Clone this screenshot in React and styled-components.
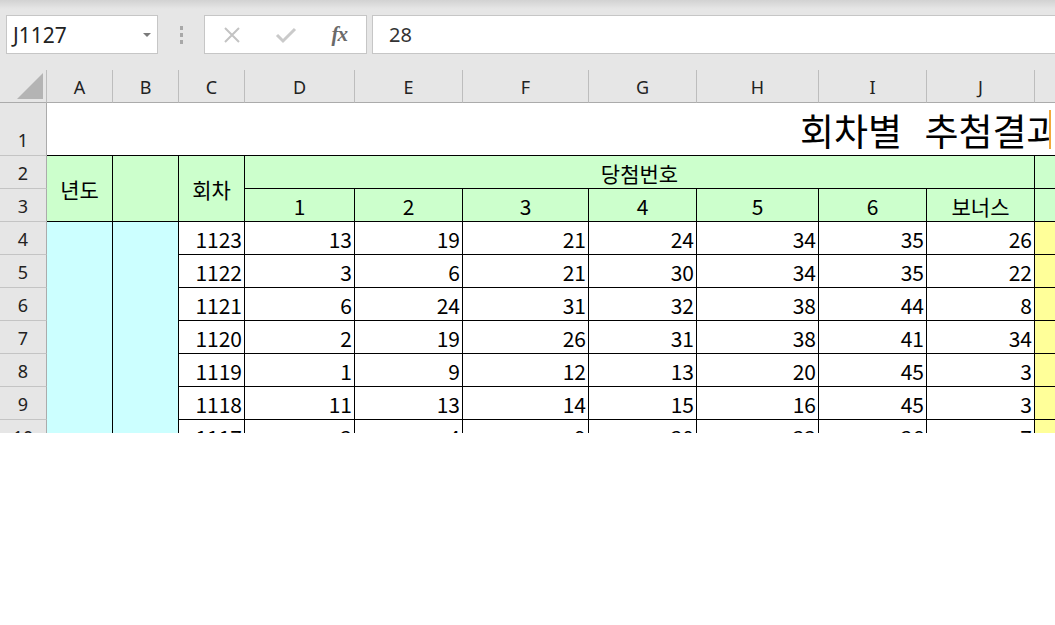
import React from 'react';
import styled, { createGlobalStyle } from 'styled-components';

const GlobalStyle = createGlobalStyle`
  html, body {
    margin: 0;
    padding: 0;
    background: #ffffff;
  }
  body {
    font-family: 'Noto Sans', 'Noto Sans CJK KR', sans-serif;
  }
`;

const COLS = [47, 66, 66, 66, 110, 108, 126, 108, 122, 108, 108, 108];
const LETTERS = ['A', 'B', 'C', 'D', 'E', 'F', 'G', 'H', 'I', 'J', 'K'];

const ROWS = [
  [1123, 13, 19, 21, 24, 34, 35, 26],
  [1122, 3, 6, 21, 30, 34, 35, 22],
  [1121, 6, 24, 31, 32, 38, 44, 8],
  [1120, 2, 19, 26, 31, 38, 41, 34],
  [1119, 1, 9, 12, 13, 20, 45, 3],
  [1118, 11, 13, 14, 15, 16, 45, 3],
  [1117, 3, 4, 9, 30, 33, 36, 7],
  [1116, 15, 16, 17, 25, 30, 31, 32],
];

const Window = styled.div`
  width: 1055px;
  height: 433px;
  overflow: hidden;
  background: #e6e6e6;
`;

const FormulaBar = styled.div`
  height: 70px;
  box-sizing: border-box;
  padding: 15px 0 16px 6px;
  display: flex;
  align-items: stretch;
  background: linear-gradient(#d2d2d2 0px, #e6e6e6 9px, #e6e6e6 100%);
`;

const Box = styled.div`
  background: #ffffff;
  border: 1px solid #c6c6c6;
  box-sizing: border-box;
  display: flex;
  align-items: center;
`;

const NameBox = styled(Box)`
  width: 152px;
  padding: 0 6px 0 6px;
  justify-content: space-between;
  font-size: 21px;
  color: #222;
`;

const Caret = styled.span`
  width: 0;
  height: 0;
  border-left: 4px solid transparent;
  border-right: 4px solid transparent;
  border-top: 4px solid #7a7a7a;
  margin-top: 1px;
`;

const Grip = styled.div`
  width: 46px;
  display: flex;
  flex-direction: column;
  align-items: center;
  justify-content: center;
  gap: 3px;
  span {
    width: 3px;
    height: 4px;
    background: #a8a8a8;
  }
`;

const ButtonsBox = styled(Box)`
  width: 163px;
`;

const IconSlot = styled.div`
  width: 54px;
  display: flex;
  align-items: center;
  justify-content: center;
`;

const FxText = styled.span`
  font-family: 'Liberation Serif', serif;
  font-style: italic;
  font-weight: bold;
  font-size: 21px;
  color: #6a6a6a;
  letter-spacing: -1px;
`;

const FormulaInput = styled(Box)`
  flex: 1;
  margin-left: 5px;
  border-right: none;
  padding-left: 16px;
  font-size: 20px;
  color: #333;
`;

const Sheet = styled.div`
  display: grid;
  grid-template-columns: ${COLS.map((c) => c + 'px').join(' ')};
  grid-template-rows: 33px 53px repeat(10, 33px);
  background: #ffffff;
  font-family: 'Noto Sans CJK KR', 'Noto Sans', sans-serif;
`;

const Corner = styled.div`
  grid-column: 1;
  grid-row: 1;
  background: #e6e6e6;
  border-right: 1px solid #bdbdbd;
  border-bottom: 1px solid #ababab;
  display: flex;
  align-items: flex-end;
  justify-content: flex-end;
  padding: 0 3px 3px 0;
`;

const ColHead = styled.div`
  background: #e6e6e6;
  border-right: 1px solid #bdbdbd;
  border-bottom: 1px solid #ababab;
  display: flex;
  align-items: center;
  justify-content: center;
  font-family: 'Noto Sans', sans-serif;
  font-size: 18px;
  color: #222;
  padding-top: 1px;
`;

const RowHead = styled.div`
  grid-column: 1;
  grid-row: ${(p) => p.$row};
  background: #e6e6e6;
  border-right: 1px solid #ababab;
  border-bottom: 1px solid #c4c4c4;
  display: flex;
  align-items: flex-end;
  justify-content: center;
  padding-bottom: 3px;
  font-family: 'Noto Sans', sans-serif;
  font-size: 18px;
  color: #222;
`;

const Cell = styled.div`
  grid-column: ${(p) => p.$col};
  grid-row: ${(p) => p.$row};
  background: ${(p) => p.$bg || '#ffffff'};
  border-right: 1px solid ${(p) => p.$line || '#000'};
  border-bottom: 1px solid #000;
  display: flex;
  align-items: center;
  justify-content: ${(p) => (p.$right ? 'flex-end' : 'center')};
  padding-right: ${(p) => (p.$right ? '2px' : '0')};
  padding-top: 1px;
  font-size: 21px;
  color: #000;
  white-space: nowrap;
  overflow: hidden;
`;

const TitleCell = styled.div`
  grid-column: 2 / 13;
  grid-row: 2;
  overflow: hidden;
  border-bottom: 1px solid #000;
  display: flex;
  align-items: center;
  font-size: 37px;
  white-space: nowrap;
`;

const TitleText = styled.span`
  display: block;
  box-sizing: border-box;
  width: 1004px;
  padding: 1px 0 0 753px;
  overflow: hidden;
  word-spacing: 14px;
  line-height: 38px;
  border-right: 2px solid #f2a93b;
`;

const GREEN = '#ccffcc';
const CYAN = '#ccffff';
const YELLOW = '#ffff99';

const App = () => {
  const rowNums = Array.from({ length: 11 }, (_, i) => i + 1);
  return (
    <>
      <GlobalStyle />
      <Window>
        <FormulaBar>
          <NameBox>
            <span>J1127</span>
            <Caret />
          </NameBox>
          <Grip>
            <span />
            <span />
            <span />
          </Grip>
          <ButtonsBox>
            <IconSlot>
              <svg width="20" height="20" viewBox="0 0 20 20">
                <path d="M3 3 L17 17 M17 3 L3 17" stroke="#c3c3c3" strokeWidth="2" fill="none" />
              </svg>
            </IconSlot>
            <IconSlot>
              <svg width="22" height="20" viewBox="0 0 22 20">
                <path d="M2 10 L8 16 L20 4" stroke="#cacaca" strokeWidth="3" fill="none" />
              </svg>
            </IconSlot>
            <IconSlot>
              <FxText>fx</FxText>
            </IconSlot>
          </ButtonsBox>
          <FormulaInput>28</FormulaInput>
        </FormulaBar>

        <Sheet>
          <Corner>
            <svg width="26" height="26" viewBox="0 0 26 26">
              <polygon points="26,0 26,26 0,26" fill="#b4b4b4" />
            </svg>
          </Corner>
          {LETTERS.map((l) => (
            <ColHead key={l}>{l}</ColHead>
          ))}
          <ColHead />

          {rowNums.map((n) => (
            <RowHead key={n} $row={n + 1}>{n}</RowHead>
          ))}

          <TitleCell>
            <TitleText>회차별 추첨결과</TitleText>
          </TitleCell>

          <Cell $col="2" $row="3 / 5" $bg={GREEN}>년도</Cell>
          <Cell $col="3" $row="3 / 5" $bg={GREEN} />
          <Cell $col="4" $row="3 / 5" $bg={GREEN}>회차</Cell>
          <Cell $col="5 / 12" $row="3" $bg={GREEN}>당첨번호</Cell>
          {['1', '2', '3', '4', '5', '6', '보너스'].map((h, i) => (
            <Cell key={h} $col={5 + i} $row="4" $bg={GREEN}>{h}</Cell>
          ))}
          <Cell $col="12" $row="3" $bg={GREEN} $line="#d4d4d4" />
          <Cell $col="12" $row="4" $bg={GREEN} $line="#d4d4d4" />

          <Cell $col="2" $row="5 / 13" $bg={CYAN} />
          <Cell $col="3" $row="5 / 13" $bg={CYAN} />
          {ROWS.map((r, ri) => (
            <React.Fragment key={r[0]}>
              {r.map((v, ci) => (
                <Cell key={ci} $col={4 + ci} $row={5 + ri} $right>{v}</Cell>
              ))}
              <Cell $col="12" $row={5 + ri} $bg={YELLOW} $line="#d4d4d4" />
            </React.Fragment>
          ))}
        </Sheet>
      </Window>
    </>
  );
};

export default App;
